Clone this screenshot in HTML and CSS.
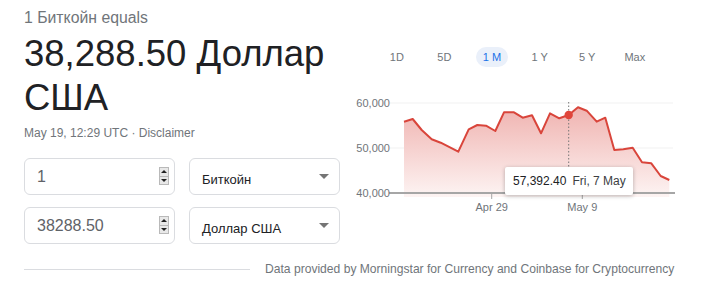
FILE: index.html
```html
<!DOCTYPE html>
<html lang="en">
<head>
<meta charset="utf-8">
<link rel="stylesheet" href="styles.css">
</head>
<body>
<div class="card">
  <div class="top">
    <div class="left">
      <div class="equals">1 Биткойн equals</div>
      <div class="amount">38,288.50 Доллар США</div>
      <div class="meta">May 19, 12:29 UTC · <span class="disc">Disclaimer</span></div>
      <div class="rows">
        <div class="row">
          <div class="num"><span class="val">1</span><span class="spin"><span class="sb up"></span><span class="sb down"></span></span></div>
          <div class="sel"><span class="opt">Биткойн</span><span class="caret"></span></div>
        </div>
        <div class="row">
          <div class="num"><span class="val">38288.50</span><span class="spin"><span class="sb up"></span><span class="sb down"></span></span></div>
          <div class="sel"><span class="opt">Доллар США</span><span class="caret"></span></div>
        </div>
      </div>
    </div>
    <div class="right">
      <div class="tabs">
        <div class="tab"><span>1D</span></div>
        <div class="tab"><span>5D</span></div>
        <div class="tab"><span class="active">1 M</span></div>
        <div class="tab"><span>1 Y</span></div>
        <div class="tab"><span>5 Y</span></div>
        <div class="tab"><span>Max</span></div>
      </div>
      <div class="chart">
        <svg width="352" height="130" viewBox="0 0 352 130">
          <defs>
            <linearGradient id="fillg" x1="0" y1="13" x2="0" y2="107" gradientUnits="userSpaceOnUse">
              <stop offset="0" stop-color="#efb0ad"/>
              <stop offset="1" stop-color="#fdf4f3"/>
            </linearGradient>
          </defs>
          <line x1="40" y1="13" x2="323" y2="13" stroke="#f1f1f1" stroke-width="1"/>
          <line x1="40" y1="58" x2="323" y2="58" stroke="#f1f1f1" stroke-width="1"/>
          <path d="M54 31.7 L62.7 29 L71.7 40 L81.7 49.3 L90.7 52.7 L108.3 61.7 L118.7 39.3 L127.3 35 L136 35.7 L145.3 41 L154 22.3 L164 22.3 L172.7 27.7 L182 25.3 L191 43.3 L200 23.3 L209.3 28.3 L218.7 25 L228 17.3 L236.7 20.7 L246.7 31.7 L255.3 27.7 L264.3 60 L273.3 59.3 L282.7 57.7 L292 72.3 L301.3 73.3 L310.7 86 L319.3 90 L319.3 107 L54 107 Z" fill="url(#fillg)"/>
          <line x1="39" y1="103" x2="325" y2="103" stroke="#a6a6a6" stroke-width="2"/>
          <line x1="141.7" y1="103" x2="141.7" y2="109" stroke="#a6a6a6" stroke-width="1"/>
          <line x1="232.3" y1="103" x2="232.3" y2="109" stroke="#a6a6a6" stroke-width="1"/>
          <path d="M54 31.7 L62.7 29 L71.7 40 L81.7 49.3 L90.7 52.7 L108.3 61.7 L118.7 39.3 L127.3 35 L136 35.7 L145.3 41 L154 22.3 L164 22.3 L172.7 27.7 L182 25.3 L191 43.3 L200 23.3 L209.3 28.3 L218.7 25 L228 17.3 L236.7 20.7 L246.7 31.7 L255.3 27.7 L264.3 60 L273.3 59.3 L282.7 57.7 L292 72.3 L301.3 73.3 L310.7 86 L319.3 90" fill="none" stroke="#d9453b" stroke-width="2" stroke-linejoin="round"/>
          <line x1="218.7" y1="12" x2="218.7" y2="78" stroke="#777" stroke-width="1" stroke-dasharray="1.5 2"/>
          <circle cx="218.7" cy="25" r="4.2" fill="#e0453a"/>
          <text class="ylab" x="40" y="17" text-anchor="end">60,000</text>
          <text class="ylab" x="40" y="62" text-anchor="end">50,000</text>
          <text class="ylab" x="40" y="107" text-anchor="end">40,000</text>
          <text class="xlab" x="141.7" y="121" text-anchor="middle">Apr 29</text>
          <text class="xlab" x="232.3" y="121" text-anchor="middle">May 9</text>
        </svg>
        <div class="tip"><span>57,392.40</span><span class="tdate">Fri, 7 May</span></div>
      </div>
    </div>
  </div>
  <div class="foot">
    <div class="rule"></div>
    <div class="src">Data provided by Morningstar for Currency and Coinbase for Cryptocurrency</div>
  </div>
</div>
</body>
</html>
```

FILE: styles.css
```css
* { box-sizing: border-box; }
html, body { margin: 0; padding: 0; background: #fff; }
body { font-family: "Liberation Sans", Arial, sans-serif; color: #202124; }

.card { width: 702px; padding: 8px 0 0 24px; }
.top { display: flex; gap: 10px; }
.left { width: 316px; flex: none; }
.right { flex: 1; }

.equals { font-size: 15.8px; line-height: 20px; color: #70757a; }
.amount { margin-top: 4px; font-size: 36.5px; line-height: 44px; color: #202124; }
.meta { margin-top: 5px; font-size: 12px; line-height: 16px; color: #70757a; }

.rows { margin-top: 17px; display: flex; flex-direction: column; gap: 12px; }
.row { display: flex; gap: 14px; }
.num, .sel {
  width: 151px; height: 37px;
  border: 1px solid #dadce0; border-radius: 6px;
  display: flex; align-items: center; justify-content: space-between;
}
.num { padding: 0 5px 0 12px; }
.val { font-size: 16px; color: #5f6368; }
.spin { display: flex; flex-direction: column; width: 10px; height: 18px; margin-top: -1px; }
.sb { position: relative; flex: 1; background: #e8e8e8; border: 1px solid #b9b9b9; }
.sb.up { border-bottom-width: 0; }
.sb::after {
  content: ""; position: absolute; left: 50%; top: 50%;
  width: 0; height: 0; margin-left: -3px;
  border-left: 3px solid transparent; border-right: 3px solid transparent;
}
.sb.up::after { border-bottom: 3px solid #222; margin-top: -2px; }
.sb.down::after { border-top: 3px solid #222; margin-top: -1px; }

.sel { padding: 5px 10px 0 12px; }
.opt { font-size: 13px; color: #202124; }
.caret {
  width: 0; height: 0; margin-top: -6px;
  border-left: 5px solid transparent; border-right: 5px solid transparent;
  border-top: 5px solid #757575;
}

.tabs { display: flex; margin-top: 39px; padding-left: 23px; }
.tab { width: 47.6px; text-align: center; }
.tab span {
  display: inline-block; padding: 4px 7px; border-radius: 10px;
  font-size: 11px; line-height: 12px; color: #70757a;
}
.tab span.active { background: #eaf0fa; color: #1a73e8; }

.chart { position: relative; margin-top: 23px; width: 352px; height: 130px; }
.chart svg { display: block; }
.ylab, .xlab { font-family: "Liberation Sans", Arial, sans-serif; font-size: 11px; fill: #70757a; }

.tip {
  position: absolute; left: 155px; top: 77px; width: 128px; height: 28px;
  background: #fff; border-radius: 2px;
  box-shadow: 0 1px 4px rgba(0,0,0,0.28);
  padding: 0 8px; display: flex; align-items: center;
  font-size: 12px; color: #202124; white-space: nowrap;
}
.tdate { margin-left: 6px; color: #3c4043; }

.foot { display: flex; align-items: center; margin-top: 17px; height: 16px; }
.rule { width: 226px; height: 1px; background: #dadce0; margin-right: 15px; }
.src { font-size: 12.1px; line-height: 16px; color: #70757a; white-space: nowrap; }
```
